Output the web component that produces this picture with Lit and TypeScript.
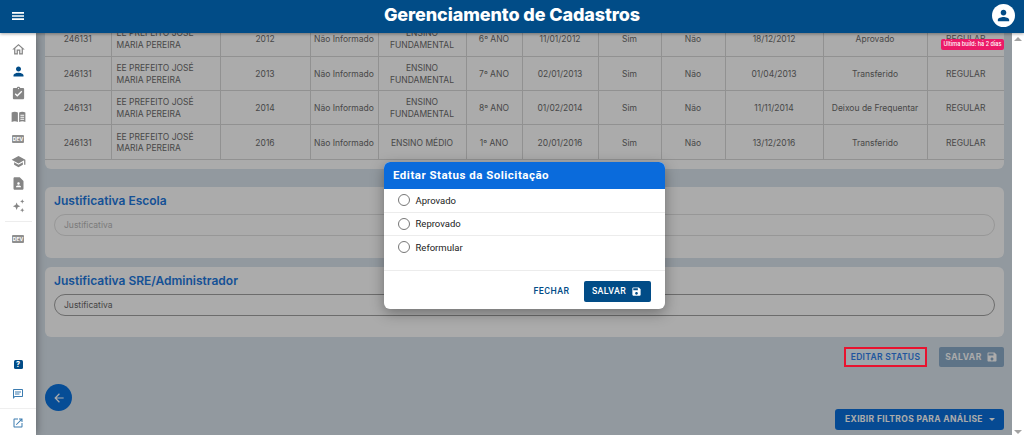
import { LitElement, html, css, svg } from "lit";
import { customElement } from "lit/decorators.js";

const P = {
  menu: "M3 18h18v-2.500H3V18zm0-4.750h18v-2.500H3v2.500zM3 6v2.500h18V6H3z",
  home: "M12 5.69l5 4.500V18h-2v-6H9v6H7v-7.810l5-4.500M12 3L2 12h3v8h6v-6h2v6h6v-8h3L12 3z",
  person: "M12 12c2.210 0 4-1.790 4-4s-1.790-4-4-4-4 1.790-4 4 1.790 4 4 4zm0 2c-2.670 0-8 1.340-8 4v2h16v-2c0-2.660-5.330-4-8-4z",
  task: "M19 3h-4.180C14.400 1.840 13.300 1 12 1c-1.300 0-2.400.84-2.820 2H5c-1.100 0-2 .9-2 2v14c0 1.100.9 2 2 2h14c1.100 0 2-.9 2-2V5c0-1.100-.9-2-2-2zm-7 0c.55 0 1 .45 1 1s-.45 1-1 1-1-.45-1-1 .45-1 1-1zm-2 14l-4-4 1.410-1.410L10 14.170l6.590-6.590L18 9l-8 8z",
  book: "M11 5.600C9.600 4.700 7.600 4.400 6 4.400c-1.700 0-3.400.4-5 1.300v14.900c1.600-.8 3.300-1.200 5-1.200 1.700 0 3.500.4 5 1.300V5.600zM13 5.600v15.100c1.500-.9 3.300-1.300 5-1.300 1.700 0 3.400.4 5 1.200V5.700c-1.600-.9-3.300-1.300-5-1.300-1.600 0-3.600.3-5 1.200zm2 3.400h6v1.600h-6V9zm0 3.200h6v1.600h-6v-1.600zm0 3.200h6V17h-6v-1.600z",
  school: "M5 13.180v4L12 21l7-3.820v-4L12 17l-7-3.820zM12 3L1 9l11 6 9-4.910V17h2V9L12 3z",
  page: "M14 2H6c-1.100 0-1.990.9-1.990 2L4 20c0 1.100.89 2 1.990 2H18c1.100 0 2-.9 2-2V8l-6-6zm-2 8c1.100 0 2 .9 2 2s-.9 2-2 2-2-.9-2-2 .9-2 2-2zm4 8H8v-.57c0-.81.48-1.530 1.220-1.850.85-.37 1.790-.58 2.780-.58.99 0 1.930.21 2.780.58.74.32 1.220 1.040 1.220 1.850V18z",
  spark: "M9 7l1.700 4.300L15 13l-4.300 1.700L9 19l-1.700-4.300L3 13l4.300-1.700zM18 2l1 2.500 2.500 1-2.500 1-1 2.500-1-2.500-2.500-1 2.500-1zM18 16l1 2.500 2.500 1-2.500 1-1 2.500-1-2.500-2.500-1 2.500-1z",
  feedback: "M20 2H4c-1.100 0-2 .9-2 2v18l4-4h14c1.100 0 2-.9 2-2V4c0-1.100-.9-2-2-2zm0 14H5.170L4 17.170V4h16v12zM6 7h12v2H6zm0 4h9v2H6z",
  open: "M19 19H5V5h7V3H5c-1.110 0-2 .9-2 2v14c0 1.100.89 2 2 2h14c1.100 0 2-.9 2-2v-7h-2v7zM14 3v2h3.590l-9.830 9.830 1.410 1.410L19 6.410V10h2V3h-7z",
  save: "M17 3H5c-1.110 0-2 .9-2 2v14c0 1.100.89 2 2 2h14c1.100 0 2-.9 2-2V7l-4-4zm-5 16c-1.660 0-3-1.340-3-3s1.340-3 3-3 3 1.340 3 3-1.340 3-3 3zm3-10H5V5h10v4z",
  back: "M20 11H7.830l5.590-5.590L12 4l-8 8 8 8 1.410-1.410L7.830 13H20v-2z",
};

const icon = (d: string, size: number, cls = "") => html`<svg class=${cls} width=${size} height=${size} viewBox="0 0 24 24" fill="currentColor" aria-hidden="true">${svg`<path d=${d}></path>`}</svg>`;

const ROWS = [
  ["246131", "EE PREFEITO JOSÉ MARIA PEREIRA", "2012", "Não Informado", "ENSINO FUNDAMENTAL", "6º ANO", "11/01/2012", "Sim", "Não", "18/12/2012", "Aprovado", "REGULAR"],
  ["246131", "EE PREFEITO JOSÉ MARIA PEREIRA", "2013", "Não Informado", "ENSINO FUNDAMENTAL", "7º ANO", "02/01/2013", "Sim", "Não", "01/04/2013", "Transferido", "REGULAR"],
  ["246131", "EE PREFEITO JOSÉ MARIA PEREIRA", "2014", "Não Informado", "ENSINO FUNDAMENTAL", "8º ANO", "01/02/2014", "Sim", "Não", "11/11/2014", "Deixou de Frequentar", "REGULAR"],
  ["246131", "EE PREFEITO JOSÉ MARIA PEREIRA", "2016", "Não Informado", "ENSINO MÉDIO", "1º ANO", "20/01/2016", "Sim", "Não", "13/12/2016", "Transferido", "REGULAR"],
];
const COLS = [66, 109, 90, 68, 88, 56, 76, 63, 64, 98, 104, 77];

@customElement("app-root")
export class AppRoot extends LitElement {
  static styles = css`
    :host { display: block; width: 1024px; height: 435px; overflow: hidden; font-family: Inter, "Liberation Sans", sans-serif; }
    * { box-sizing: border-box; }
    .app { display: grid; grid-template-columns: 36px 976px 12px; grid-template-rows: 33px 402px; height: 435px; background: #fff; }
    .header { grid-column: 1 / -1; z-index: 20; display: flex; align-items: center; justify-content: space-between; padding: 0 4px 0 10px; background: #014c87; color: #fff; box-shadow: 0 1px 3px rgba(0,0,0,.35); position: relative; }
    .title { position: absolute; left: 0; right: 0; top: 4px; line-height: 22px; text-align: center; font-size: 18px; font-weight: 800; letter-spacing: -.1px; }
    .burger { display: block; margin-top: -2px; }
    .avatar { width: 23px; height: 23px; border-radius: 50%; background: #fff; color: #014c87; display: flex; align-items: center; justify-content: center; margin: -2px 5px 0 0; position: relative; }
    .side { z-index: 10; background: #fff; box-shadow: 0 0 9px rgba(0,0,0,.4); display: flex; flex-direction: column; align-items: center; color: #858585; padding-top: 5px; position: relative; }
    .side .ico { height: 22.400px; display: flex; align-items: center; justify-content: center; }
    .side .active { color: #014c87; }
    .dev { width: 12px; height: 8px; border-radius: 1px; background: #8f8f8f; color: #fff; font-size: 5px; line-height: 8px; font-weight: 700; text-align: center; }
    .rule { width: 27px; height: 1px; background: #ededed; margin: 4px 0 6px; }
    .spacer { flex: 1; }
    .help { width: 9px; height: 9px; border-radius: 1.500px; background: #014c87; color: #fff; font-size: 7px; line-height: 9px; font-weight: 800; text-align: center; }
    .blue { color: #3c7cb0; }
    .full { width: 36px; height: 1px; background: #efefef; margin: 3px 0 4px; }
    .side .lower { height: 29px; margin-bottom: 4px; }
    .side .ext { height: 20px; margin-bottom: 2px; }
    .main { position: relative; overflow: hidden; background: #dae5ee; padding: 0 8px 0 9px; }
    .card { background: #fff; border-radius: 6px; }
    .table-card { margin-top: -12px; padding-bottom: 9px; }
    table { width: 959px; border-collapse: collapse; table-layout: fixed; font-size: 8.500px; color: #6c6c6c; }
    td { height: 34.500px; padding: 3px 3px 0; border: 1px solid #d8d8d8; border-top: 0; text-align: center; line-height: 11.500px; }
    tr:nth-child(2) td { height: 35px; }
    tr:nth-child(3) td { height: 34px; }
    td:first-child { border-left: 0; }
    td:last-child { border-right: 0; }
    td.school { text-align: left; padding-left: 5px; padding-right: 5px; }
    td.nowrap { white-space: nowrap; }
    .just { margin-top: 18px; padding: 6px 9px 0; height: 71px; }
    .just + .just { margin-top: 9px; height: 70px; }
    .just h3 { margin: 0 0 6px; color: #2279df; font-size: 12px; line-height: 15px; font-weight: 600; }
    .field { height: 22px; border-radius: 11px; border: 1px solid #e2e2e2; padding: 0 9px; font-size: 8.500px; line-height: 21px; color: #b8b8b8; }
    .field.on { border-color: #a2a2a2; color: #666; }
    .actions { display: flex; justify-content: flex-end; align-items: center; gap: 12px; margin-top: 10px; height: 20px; }
    .edit { z-index: 6; position: relative; width: 83px; height: 20px; border: 2px solid #e8132f; background: #9ea6ab; color: #20559e; font-size: 8.500px; font-weight: 600; letter-spacing: .3px; display: flex; align-items: center; justify-content: center; }
    .save-off { width: 65px; height: 20px; border-radius: 2px; background: #8bacca; color: #fff; font-size: 8.500px; font-weight: 700; letter-spacing: .5px; display: flex; align-items: center; justify-content: center; gap: 4px; }
    .filters { display: flex; justify-content: flex-end; margin-top: 42px; }
    .filter-btn { width: 169px; height: 21px; border-radius: 3px; background: #0a6fdb; color: #fff; font-size: 8.500px; font-weight: 700; letter-spacing: .35px; display: flex; align-items: center; justify-content: space-between; padding: 0 9px 0 10px; }
    .caret { width: 0; height: 0; border-left: 3px solid transparent; border-right: 3px solid transparent; border-top: 3px solid #fff; }
    .fab { position: absolute; left: 9px; top: 351px; width: 27px; height: 27px; border-radius: 50%; background: #0a73e0; color: #fff; display: flex; align-items: center; justify-content: center; }
    .overlay { position: absolute; inset: 0; z-index: 5; background: rgba(0,0,0,.33); display: flex; justify-content: center; align-items: flex-start; padding-top: 129px; }
    .badge { position: absolute; z-index: 7; right: 8px; top: 6px; width: 63px; height: 11px; border-radius: 2px; background: #ec1a68; color: #fff; font-size: 5.500px; line-height: 11px; text-align: center; font-weight: 500; }
    .modal { width: 281px; height: 147px; background: #fff; border-radius: 6px; overflow: hidden; box-shadow: 0 4px 14px rgba(0,0,0,.35); font-family: Roboto, "Liberation Sans", sans-serif; display: flex; flex-direction: column; }
    .m-head { height: 27px; background: #0a6bdc; color: #fff; font-size: 11.500px; font-weight: 700; letter-spacing: .5px; line-height: 27px; padding-left: 9.500px; }
    .opt { height: 23.500px; display: flex; align-items: center; padding-left: 14px; gap: 6px; border-bottom: 1px solid #ececec; font-size: 9.500px; color: #222; }
    .opt input { appearance: none; margin: 0; width: 12px; height: 12px; border-radius: 50%; border: 1.500px solid #777; background: #fff; flex: none; }
    .opt.last { height: 35px; padding-bottom: 12px; }
    .m-foot { flex: 1; display: flex; justify-content: flex-end; align-items: center; gap: 14px; padding: 2px 14px 0 0; }
    .close { color: #014c87; font-size: 8.800px; font-weight: 500; letter-spacing: .45px; }
    .m-save { width: 67px; height: 21px; border-radius: 2px; background: #014c87; color: #fff; font-size: 8.800px; font-weight: 500; letter-spacing: .4px; display: flex; align-items: center; justify-content: center; gap: 5px; }
    .bar { background: #fff; display: flex; flex-direction: column; justify-content: space-between; align-items: center; padding: 4px 0 1px; }
    .up { width: 0; height: 0; border-left: 4px solid transparent; border-right: 4px solid transparent; border-bottom: 4px solid #a3a3a3; }
    .down { width: 0; height: 0; border-left: 4px solid transparent; border-right: 4px solid transparent; border-top: 4px solid #a3a3a3; }
  `;

  render() {
    return html`
      <div class="app">
        <header class="header">
          ${icon(P.menu, 16, "burger")}
          <div class="title">Gerenciamento de Cadastros</div>
          <div class="avatar">${icon(P.person, 17)}</div>
        </header>
        <nav class="side">
          <div class="ico">${icon(P.home, 15)}</div>
          <div class="ico active">${icon(P.person, 15)}</div>
          <div class="ico">${icon(P.task, 15)}</div>
          <div class="ico">${icon(P.book, 15)}</div>
          <div class="ico"><div class="dev">DEV</div></div>
          <div class="ico">${icon(P.school, 15)}</div>
          <div class="ico">${icon(P.page, 15)}</div>
          <div class="ico">${icon(P.spark, 15)}</div>
          <div class="rule"></div>
          <div class="ico"><div class="dev">DEV</div></div>
          <div class="spacer"></div>
          <div class="ico lower"><div class="help">?</div></div>
          <div class="ico blue">${icon(P.feedback, 12)}</div>
          <div class="full"></div>
          <div class="ico blue ext">${icon(P.open, 12)}</div>
        </nav>
        <main class="main">
          <section class="card table-card">
            <table>
              <colgroup>${COLS.map((w) => html`<col style="width:${w}px" />`)}</colgroup>
              ${ROWS.map((r) => html`<tr>${r.map((c, i) => html`<td class=${i === 1 ? "school" : i === 3 ? "nowrap" : ""}>${c}</td>`)}</tr>`)}
            </table>
          </section>
          <section class="card just">
            <h3>Justificativa Escola</h3>
            <div class="field">Justificativa</div>
          </section>
          <section class="card just">
            <h3>Justificativa SRE/Administrador</h3>
            <div class="field on">Justificativa</div>
          </section>
          <div class="actions">
            <div class="edit">EDITAR STATUS</div>
            <div class="save-off">SALVAR ${icon(P.save, 12)}</div>
          </div>
          <div class="filters">
            <div class="filter-btn">EXIBIR FILTROS PARA ANÁLISE <span class="caret"></span></div>
          </div>
          <div class="fab">${icon(P.back, 14)}</div>
          <div class="badge">Última build: há 2 dias</div>
          <div class="overlay">
            <div class="modal">
              <div class="m-head">Editar Status da Solicitação</div>
              <label class="opt"><input type="radio" name="st" />Aprovado</label>
              <label class="opt"><input type="radio" name="st" />Reprovado</label>
              <label class="opt last"><input type="radio" name="st" />Reformular</label>
              <div class="m-foot">
                <span class="close">FECHAR</span>
                <div class="m-save">SALVAR ${icon(P.save, 11)}</div>
              </div>
            </div>
          </div>
        </main>
        <aside class="bar"><span class="up"></span><span class="down"></span></aside>
      </div>
    `;
  }
}
